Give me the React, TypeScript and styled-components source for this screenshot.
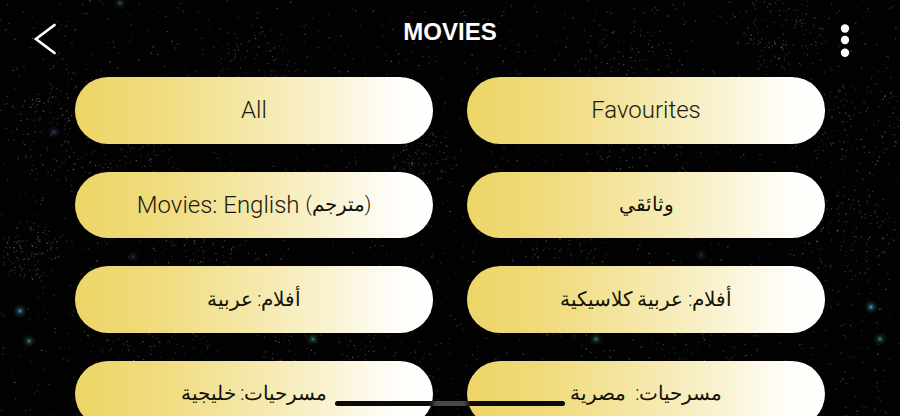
import type { ReactNode } from 'react';
import styled, { createGlobalStyle } from 'styled-components';

const GlobalStyle = createGlobalStyle`
  html, body {
    margin: 0;
    height: 100%;
    background: #020202;
  }

  #root {
    height: 100%;
  }
`;

const Screen = styled.div`
  position: relative;
  width: 900px;
  height: 416px;
  overflow: hidden;
  background: #030203;
  font-family: Roboto, "Liberation Sans", "DejaVu Sans", sans-serif;
`;

const Stars = styled.svg`
  position: absolute;
  inset: 0;
  width: 900px;
  height: 416px;
  filter: blur(0.5px);
`;

const Content = styled.div`
  position: relative;
`;

const Header = styled.header`
  display: grid;
  grid-template-columns: 1fr auto 1fr;
  align-items: start;
  height: 64px;
  margin-bottom: 13.2px;
  padding: 0 50px 0 34px;
`;

const Title = styled.h1`
  margin: 18px 0 0 16px;
  color: #fff;
  font-family: "Liberation Sans", Arial, sans-serif;
  font-size: 24px;
  line-height: 28px;
  font-weight: 700;
`;

const BackIcon = styled.svg`
  display: block;
  width: 24px;
  height: 32px;
  margin-top: 23px;
  justify-self: start;
`;

const MoreIcon = styled.svg`
  display: block;
  width: 10px;
  height: 34px;
  margin-top: 24px;
  justify-self: end;
`;

const Grid = styled.div`
  display: grid;
  grid-template-columns: 358.5px 358.5px;
  grid-auto-rows: 66.5px;
  column-gap: 33.5px;
  row-gap: 28px;
  justify-content: center;
`;

const Pill = styled.button`
  display: flex;
  align-items: center;
  justify-content: center;
  margin: 0;
  padding: 0;
  border: none;
  border-radius: 33px;
  background: linear-gradient(90deg, #edd566 0%, #f0dc80 25%, #f5e8ab 50%, #f9f2d0 70%, #fffefa 90%, #ffffff 100%);
  color: #1c1a10;
  font-family: inherit;
  font-size: 24px;
  font-weight: 300;
  white-space: pre;
`;

const Arabic = styled.span`
  font-size: 19.8px;
  color: #141208;
`;

const HomeBar = styled.div`
  position: absolute;
  left: 335px;
  top: 401px;
  width: 230px;
  height: 5px;
  border-radius: 3px;
  background: linear-gradient(90deg, #0a0a0a 0%, #0a0a0a 41%, #484848 44%, #484848 56%, #0a0a0a 59%, #0a0a0a 100%);
`;

const items: { id: string; label: ReactNode }[] = [
  { id: 'all', label: 'All' },
  { id: 'favourites', label: 'Favourites' },
  { id: 'english', label: <>Movies: English <Arabic>(مترجم)</Arabic></> },
  { id: 'docs', label: <Arabic>وثائقي</Arabic> },
  { id: 'arabic', label: <Arabic>أفلام: عربية</Arabic> },
  { id: 'classic', label: <Arabic>أفلام: عربية كلاسيكية</Arabic> },
  { id: 'gulf', label: <Arabic>مسرحيات: خليجية</Arabic> },
  { id: 'egypt', label: <Arabic>مسرحيات:  مصرية</Arabic> },
];

// small seeded generator so the star field stays the same on every load
function makeRandom(seed: number) {
  let s = seed;
  return () => {
    s = (s * 16807) % 2147483647;
    return (s - 1) / 2147483646;
  };
}

const STAR_COLORS = ['#9a8c80', '#77777c', '#8f5f50', '#5f6b7c', '#a8a294', '#66746a', '#7d4f48'];
const CLUSTERS = [
  [55, 130, 50], [130, 165, 45], [260, 70, 45], [200, 260, 50], [150, 350, 50],
  [630, 75, 60], [640, 165, 50], [860, 130, 50], [850, 230, 45], [550, 250, 45],
  [330, 340, 60], [700, 340, 60], [30, 250, 30], [780, 30, 40], [420, 160, 30],
];
const GLOWS: [number, number, string, number][] = [
  [20, 311, '#4f9ac8', 1],
  [29, 341, '#4aa898', 0.8],
  [313, 339, '#3fa088', 0.8],
  [596, 339, '#3fa088', 0.8],
  [871, 307, '#4fa4cc', 1],
  [880, 339, '#4aa898', 0.8],
  [54, 132, '#5a6aa8', 0.6],
  [120, 3, '#4f8a4f', 0.6],
  [133, 257, '#3f6f8a', 0.45],
  [701, 255, '#3f6f8a', 0.45],
];

function buildStars() {
  const random = makeRandom(4242);
  const stars: { x: number; y: number; color: string; opacity: number }[] = [];
  const pickColor = () => STAR_COLORS[Math.floor(random() * STAR_COLORS.length)];
  for (let i = 0; i < 2200; i++) {
    stars.push({ x: random() * 900, y: random() * 416, color: pickColor(), opacity: 0.2 + random() * 0.45 });
  }
  CLUSTERS.forEach(([cx, cy, radius]) => {
    for (let i = 0; i < 110; i++) {
      const angle = random() * Math.PI * 2;
      const dist = Math.sqrt(random()) * radius;
      stars.push({
        x: cx + Math.cos(angle) * dist,
        y: cy + Math.sin(angle) * dist,
        color: pickColor(),
        opacity: 0.25 + random() * 0.4,
      });
    }
  });
  return stars;
}

const stars = buildStars();

function StarField() {
  return (
    <Stars viewBox="0 0 900 416" aria-hidden="true">
      {stars.map((star, i) => (
        <rect key={i} x={star.x} y={star.y} width="1.2" height="1.2" fill={star.color} opacity={star.opacity} />
      ))}
      {GLOWS.map(([x, y, color, strength], i) => (
        <g key={i} fill={color} opacity={strength}>
          <circle cx={x} cy={y} r="6" opacity="0.12" />
          <circle cx={x} cy={y} r="3.5" opacity="0.25" />
          <circle cx={x} cy={y} r="1.5" opacity="0.8" />
        </g>
      ))}
    </Stars>
  );
}

export default function App() {
  return (
    <>
      <GlobalStyle />
      <Screen>
        <StarField />
        <Content>
          <Header>
            <BackIcon viewBox="0 0 24 32" fill="none" stroke="#fff" strokeWidth="2.7" strokeLinecap="round" strokeLinejoin="miter">
              <path d="M20.5 2 L2 16 L20.5 30" />
            </BackIcon>
            <Title>MOVIES</Title>
            <MoreIcon viewBox="0 0 10 34" fill="#fff">
              <circle cx="5" cy="4.5" r="4.2" />
              <circle cx="5" cy="16" r="4.2" />
              <circle cx="5" cy="28.7" r="4.2" />
            </MoreIcon>
          </Header>
          <Grid>
            {items.map((item) => (
              <Pill key={item.id} type="button">{item.label}</Pill>
            ))}
          </Grid>
        </Content>
        <HomeBar />
      </Screen>
    </>
  );
}
